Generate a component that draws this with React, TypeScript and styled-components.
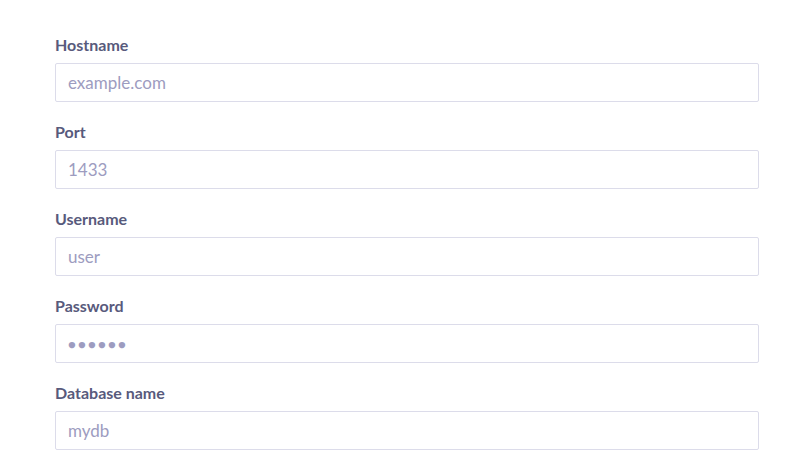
import React from "react";
import styled, { createGlobalStyle } from "styled-components";

const Global = createGlobalStyle`
  html, body { margin: 0; padding: 0; background: #ffffff; }
  body { font-family: Lato, "Open Sans", sans-serif; }
  * { box-sizing: border-box; }
`;

const Form = styled.form`
  display: flex;
  flex-direction: column;
  gap: 20px;
  width: 704px;
  margin: 35px 0 0 55px;
`;

const Field = styled.div`
  display: flex;
  flex-direction: column;
  gap: 8px;
`;

const Label = styled.label`
  font-family: Lato, sans-serif;
  font-weight: 700;
  font-size: 16px;
  line-height: 20px;
  color: #585a7c;
`;

const Input = styled.input<{ $dots?: boolean }>`
  height: 39px;
  width: 100%;
  border: 1px solid #dcdcea;
  border-radius: 2px;
  padding: 0 12px;
  font-family: Lato, sans-serif;
  font-size: ${(p) => (p.$dots ? "13px" : "17px")};
  color: #585a7c;
  background: #fff;
  outline: none;
  &::placeholder {
    color: #9d9cc0;
    letter-spacing: ${(p) => (p.$dots ? "2.2px" : "0")};
  }
`;

const fields = [
  { label: "Hostname", placeholder: "example.com" },
  { label: "Port", placeholder: "1433" },
  { label: "Username", placeholder: "user" },
  { label: "Password", placeholder: "●●●●●●", dots: true },
  { label: "Database name", placeholder: "mydb" },
];

export default function App() {
  return (
    <>
      <Global />
      <Form onSubmit={(e) => e.preventDefault()}>
        {fields.map((f) => (
          <Field key={f.label}>
            <Label>{f.label}</Label>
            <Input placeholder={f.placeholder} $dots={f.dots} />
          </Field>
        ))}
      </Form>
    </>
  );
}
